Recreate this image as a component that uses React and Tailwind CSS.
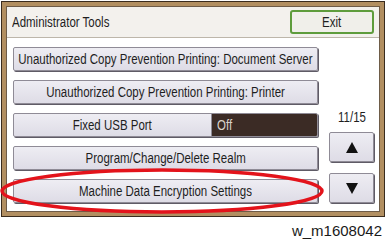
import React from 'react';

const rows = [
  'Unauthorized Copy Prevention Printing: Document Server',
  'Unauthorized Copy Prevention Printing: Printer',
  null,
  'Program/Change/Delete Realm',
  'Machine Data Encryption Settings',
];

// panel font is a tall condensed face; squeeze Liberation Sans to match
function Txt({ children, className = '' }) {
  return <span className={`inline-block whitespace-nowrap scale-x-[0.82] ${className}`}>{children}</span>;
}

function Key({ children, className = '' }) {
  return (
    <div
      className={`h-[24px] rounded-[2px] border border-[#8f8b96] bg-gradient-to-b from-[#eeedf3] to-[#dedce6] shadow-[1px_1px_0_#5f5b66] ${className}`}
    >
      {children}
    </div>
  );
}

function ArrowKey({ down }) {
  return (
    <div className="w-[45px] h-[30px] flex items-center justify-center rounded-[2px] border border-[#8f8b96] bg-gradient-to-b from-[#eeedf3] to-[#dedce6] shadow-[1px_1px_0_#5f5b66]">
      <svg width="12" height="11" viewBox="0 0 12 11">
        {down ? <polygon points="0,0 12,0 6,11" fill="#111" /> : <polygon points="6,0 12,11 0,11" fill="#111" />}
      </svg>
    </div>
  );
}

export default function App() {
  return (
    <div className="relative w-[386px] h-[241px] bg-white overflow-hidden pt-[1px] pl-[1px] font-['Liberation_Sans',Arial,sans-serif]">
      <div className="w-[384px] h-[216px] border border-[#3a2c1e] bg-[#b28f61] p-[4px]">
        <div className="h-full border border-[#6e5c48] bg-white flex flex-col">
          {/* header */}
          <div className="h-[31px] shrink-0 bg-[#f3f1ed] border-b border-[#bdb6aa] flex items-center justify-between pl-[5px] pr-[5px]">
            <Txt className="origin-left text-[14px] text-[#1e1e1e] leading-none">Administrator Tools</Txt>
            <div className="w-[84px] h-[24px] rounded-[3px] border-2 border-[#5e9c3c] bg-[#f0efea] flex items-center justify-center text-[14px] text-[#1e1e1e]">
              <Txt>Exit</Txt>
            </div>
          </div>

          {/* body */}
          <div className="flex pl-[6px] pt-[9px]">
            <div className="w-[305px] flex flex-col gap-[9px]">
              {rows.map((label, i) =>
                label ? (
                  <Key key={i} className="flex items-center justify-center text-[14px] text-[#1e1e1e]">
                    <Txt>{label}</Txt>
                  </Key>
                ) : (
                  <Key key={i} className="flex overflow-hidden text-[14px]">
                    <div className="w-[197px] flex items-center justify-center text-[#1e1e1e]">
                      <Txt>Fixed USB Port</Txt>
                    </div>
                    <div className="flex-1 flex items-center pl-[5px] bg-[#3b2b25] border-l border-[#8f8b96] text-[#d9d2cb]">
                      <Txt className="origin-left">Off</Txt>
                    </div>
                  </Key>
                )
              )}
            </div>
            <div className="ml-[11px] w-[45px] flex flex-col items-center justify-end">
              <div className="text-[14px] text-[#1e1e1e] leading-none mb-[8px]">
                <Txt>11/15</Txt>
              </div>
              <ArrowKey />
              <div className="h-[11px]" />
              <ArrowKey down />
            </div>
          </div>
        </div>
      </div>

      <div className="flex justify-end pr-[4px] mt-[6px] text-[15px] leading-none text-[#1a1a1a]">w_m1608042</div>

      <svg className="absolute left-0 top-0 pointer-events-none" width="386" height="241">
        <ellipse cx="162" cy="191" rx="160" ry="21" fill="none" stroke="#e3131b" strokeWidth="3.5" />
      </svg>
    </div>
  );
}
